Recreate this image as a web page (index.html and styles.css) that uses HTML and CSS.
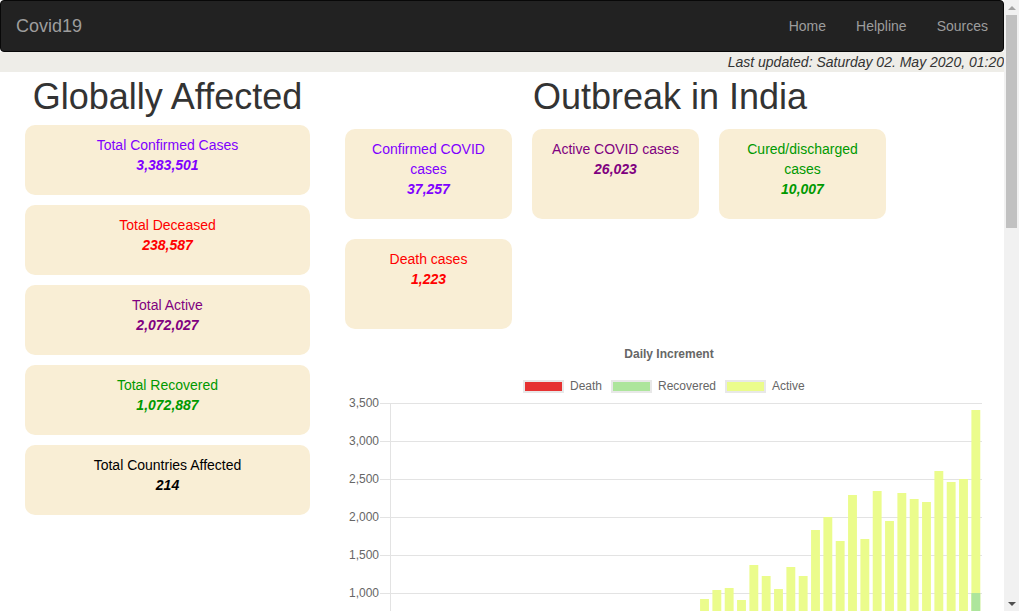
FILE: index.html
```html
<!DOCTYPE html>
<html lang="en">
<head>
<meta charset="utf-8">
<title>Covid19</title>
<link rel="stylesheet" href="styles.css">
</head>
<body>
<div class="page">
<nav class="navbar">
  <a class="brand" href="#">Covid19</a>
  <ul class="nav-links">
    <li><a href="#">Home</a></li>
    <li><a href="#">Helpline</a></li>
    <li><a href="#">Sources</a></li>
  </ul>
</nav>
<div class="updated"><span>Last updated: Saturday 02. May 2020, 01:20</span></div>
<main class="content">
  <section class="global">
    <h1 class="heading heading-global">Globally Affected</h1>
    <div class="stat-list">
      <div class="card card-wide"><div class="c-confirmed">Total Confirmed Cases</div><div class="value c-confirmed">3,383,501</div></div>
      <div class="card card-wide"><div class="c-death">Total Deceased</div><div class="value c-death">238,587</div></div>
      <div class="card card-wide"><div class="c-active">Total Active</div><div class="value c-active">2,072,027</div></div>
      <div class="card card-wide"><div class="c-recovered">Total Recovered</div><div class="value c-recovered">1,072,887</div></div>
      <div class="card card-wide"><div class="c-black">Total Countries Affected</div><div class="value c-black">214</div></div>
    </div>
  </section>
  <section class="india">
    <h1 class="heading heading-india">Outbreak in India</h1>
    <div class="india-grid">
      <div class="card card-small"><div class="c-confirmed">Confirmed COVID cases</div><div class="value c-confirmed">37,257</div></div>
      <div class="card card-small"><div class="c-active">Active COVID cases</div><div class="value c-active">26,023</div></div>
      <div class="card card-small"><div class="c-recovered">Cured/discharged cases</div><div class="value c-recovered">10,007</div></div>
      <div class="card card-small"><div class="c-death">Death cases</div><div class="value c-death">1,223</div></div>
    </div>
    <div class="chart">
      <svg class="chart-svg" width="650" height="400" viewBox="0 0 650 400" xmlns="http://www.w3.org/2000/svg">
        <text class="chart-title" x="324" y="18" text-anchor="middle">Daily Increment</text>
        <g class="legend">
          <rect x="179" y="41" width="39" height="11" fill="#e63232" stroke="#e8e8e8" stroke-width="2"/>
          <text x="225" y="50">Death</text>
          <rect x="267" y="41" width="39" height="11" fill="#ade59c" stroke="#e8e8e8" stroke-width="2"/>
          <text x="313" y="50">Recovered</text>
          <rect x="381" y="41" width="39" height="11" fill="#ebfc8c" stroke="#e8e8e8" stroke-width="2"/>
          <text x="427" y="50">Active</text>
        </g>
        <g class="grid" stroke="#e3e3e3" stroke-width="1">
          <line x1="35" y1="63.5" x2="637" y2="63.5"/>
          <line x1="35" y1="101.5" x2="637" y2="101.5"/>
          <line x1="35" y1="139.5" x2="637" y2="139.5"/>
          <line x1="35" y1="177.5" x2="637" y2="177.5"/>
          <line x1="35" y1="215.5" x2="637" y2="215.5"/>
          <line x1="35" y1="253.5" x2="637" y2="253.5"/>
          <line x1="35" y1="291.5" x2="637" y2="291.5"/>
          <line x1="35" y1="329.5" x2="637" y2="329.5"/>
          <line x1="45.5" y1="63" x2="45.5" y2="339"/>
        </g>
        <g class="ylabels" text-anchor="end">
          <text x="34" y="67">3,500</text>
          <text x="34" y="105">3,000</text>
          <text x="34" y="143">2,500</text>
          <text x="34" y="181">2,000</text>
          <text x="34" y="219">1,500</text>
          <text x="34" y="257">1,000</text>
          <text x="34" y="295">500</text>
          <text x="34" y="333">0</text>
        </g>
        <g class="bars-active" fill="#ebfc8c">
          <rect x="46.73" y="328" width="8.88" height="1"/>
          <rect x="59.06" y="327.8" width="8.88" height="1.2"/>
          <rect x="71.40" y="327.3" width="8.88" height="1.7"/>
          <rect x="83.73" y="326.8" width="8.88" height="2.2"/>
          <rect x="96.06" y="325.8" width="8.88" height="3.2"/>
          <rect x="108.40" y="325" width="8.88" height="4"/>
          <rect x="120.73" y="324.2" width="8.88" height="4.8"/>
          <rect x="133.06" y="323" width="8.88" height="6"/>
          <rect x="145.40" y="321.6" width="8.88" height="7.4"/>
          <rect x="157.73" y="320.5" width="8.88" height="8.5"/>
          <rect x="170.06" y="318" width="8.88" height="11"/>
          <rect x="182.40" y="316.5" width="8.88" height="12.5"/>
          <rect x="194.73" y="314" width="8.88" height="15"/>
          <rect x="207.06" y="312.6" width="8.88" height="16.4"/>
          <rect x="219.40" y="309.5" width="8.88" height="19.5"/>
          <rect x="231.73" y="308" width="8.88" height="21"/>
          <rect x="244.06" y="306" width="8.88" height="23"/>
          <rect x="256.40" y="302" width="8.88" height="27"/>
          <rect x="268.73" y="299.5" width="8.88" height="29.5"/>
          <rect x="281.06" y="297" width="8.88" height="32"/>
          <rect x="293.40" y="291" width="8.88" height="38"/>
          <rect x="305.73" y="289" width="8.88" height="40"/>
          <rect x="318.06" y="285" width="8.88" height="44"/>
          <rect x="330.40" y="281" width="8.88" height="48"/>
          <rect x="342.73" y="277" width="8.88" height="52"/>
          <rect x="355.06" y="259" width="8.88" height="70"/>
          <rect x="367.40" y="250" width="8.88" height="79"/>
          <rect x="379.73" y="248" width="8.88" height="81"/>
          <rect x="392.06" y="260" width="8.88" height="69"/>
          <rect x="404.40" y="225" width="8.88" height="104"/>
          <rect x="416.73" y="236" width="8.88" height="93"/>
          <rect x="429.06" y="249" width="8.88" height="80"/>
          <rect x="441.40" y="227" width="8.88" height="102"/>
          <rect x="453.73" y="236" width="8.88" height="93"/>
          <rect x="466.06" y="190" width="8.88" height="139"/>
          <rect x="478.40" y="177" width="8.88" height="152"/>
          <rect x="490.73" y="201" width="8.88" height="128"/>
          <rect x="503.06" y="155" width="8.88" height="174"/>
          <rect x="515.40" y="199" width="8.88" height="130"/>
          <rect x="527.73" y="151" width="8.88" height="178"/>
          <rect x="540.06" y="181" width="8.88" height="148"/>
          <rect x="552.40" y="153" width="8.88" height="176"/>
          <rect x="564.73" y="159" width="8.88" height="170"/>
          <rect x="577.06" y="162" width="8.88" height="167"/>
          <rect x="589.40" y="131" width="8.88" height="198"/>
          <rect x="601.73" y="142" width="8.88" height="187"/>
          <rect x="614.06" y="139" width="8.88" height="190"/>
          <rect x="626.40" y="70" width="8.88" height="259"/>
        </g>
        <g class="bars-recovered" fill="#ade59c">
          <rect x="170.06" y="328" width="8.88" height="1"/>
          <rect x="182.40" y="328" width="8.88" height="1"/>
          <rect x="194.73" y="327" width="8.88" height="2"/>
          <rect x="207.06" y="327" width="8.88" height="2"/>
          <rect x="219.40" y="327" width="8.88" height="2"/>
          <rect x="231.73" y="326" width="8.88" height="3"/>
          <rect x="244.06" y="326" width="8.88" height="3"/>
          <rect x="256.40" y="326" width="8.88" height="3"/>
          <rect x="268.73" y="325" width="8.88" height="4"/>
          <rect x="281.06" y="325" width="8.88" height="4"/>
          <rect x="293.40" y="324" width="8.88" height="5"/>
          <rect x="305.73" y="324" width="8.88" height="5"/>
          <rect x="318.06" y="323" width="8.88" height="6"/>
          <rect x="330.40" y="323" width="8.88" height="6"/>
          <rect x="342.73" y="322" width="8.88" height="7"/>
          <rect x="355.06" y="319" width="8.88" height="10"/>
          <rect x="367.40" y="317" width="8.88" height="12"/>
          <rect x="379.73" y="315" width="8.88" height="14"/>
          <rect x="392.06" y="321" width="8.88" height="8"/>
          <rect x="404.40" y="314" width="8.88" height="15"/>
          <rect x="416.73" y="309" width="8.88" height="20"/>
          <rect x="429.06" y="317" width="8.88" height="12"/>
          <rect x="441.40" y="311" width="8.88" height="18"/>
          <rect x="453.73" y="314" width="8.88" height="15"/>
          <rect x="466.06" y="304" width="8.88" height="25"/>
          <rect x="478.40" y="301" width="8.88" height="28"/>
          <rect x="490.73" y="309" width="8.88" height="20"/>
          <rect x="503.06" y="299" width="8.88" height="30"/>
          <rect x="515.40" y="307" width="8.88" height="22"/>
          <rect x="527.73" y="294" width="8.88" height="35"/>
          <rect x="540.06" y="304" width="8.88" height="25"/>
          <rect x="552.40" y="297" width="8.88" height="32"/>
          <rect x="564.73" y="299" width="8.88" height="30"/>
          <rect x="577.06" y="301" width="8.88" height="28"/>
          <rect x="589.40" y="289" width="8.88" height="40"/>
          <rect x="601.73" y="294" width="8.88" height="35"/>
          <rect x="614.06" y="291" width="8.88" height="38"/>
          <rect x="626.40" y="253" width="8.88" height="76"/>
        </g>
        <g class="bars-death" fill="#e63232">
          <rect x="355.06" y="327" width="8.88" height="2"/>
          <rect x="367.40" y="327" width="8.88" height="2"/>
          <rect x="379.73" y="327" width="8.88" height="2"/>
          <rect x="404.40" y="326" width="8.88" height="3"/>
          <rect x="416.73" y="326" width="8.88" height="3"/>
          <rect x="441.40" y="326" width="8.88" height="3"/>
          <rect x="466.06" y="325" width="8.88" height="4"/>
          <rect x="478.40" y="325" width="8.88" height="4"/>
          <rect x="503.06" y="325" width="8.88" height="4"/>
          <rect x="527.73" y="324" width="8.88" height="5"/>
          <rect x="552.40" y="324" width="8.88" height="5"/>
          <rect x="589.40" y="323" width="8.88" height="6"/>
          <rect x="614.06" y="323" width="8.88" height="6"/>
          <rect x="626.40" y="323" width="8.88" height="6"/>
        </g>
      </svg>
    </div>
  </section>
</main>
</div>
<div class="scrollbar" aria-hidden="true">
  <div class="sb-btn"><span class="sb-arrow-up"></span></div>
  <div class="sb-thumb"></div>
  <div class="sb-track"></div>
  <div class="sb-btn"><span class="sb-arrow-down"></span></div>
</div>
</body>
</html>
```

FILE: styles.css
```css
* {
  box-sizing: border-box;
}

html, body {
  margin: 0;
  padding: 0;
}

body {
  font-family: "Liberation Sans", Arial, sans-serif;
  font-size: 14px;
  line-height: 20px;
  color: #333;
  background: #fff;
}

.page {
  width: 1004px;
}

.navbar {
  display: flex;
  justify-content: space-between;
  align-items: stretch;
  height: 52px;
  background: #222;
  border: 1px solid #080808;
  border-radius: 4px;
}

.brand {
  display: block;
  padding: 15px 15px;
  font-size: 18px;
  line-height: 20px;
  color: #9d9d9d;
  text-decoration: none;
}

.nav-links {
  display: flex;
  list-style: none;
  margin: 0;
  padding: 0;
}

.nav-links a {
  display: block;
  padding: 15px 15px;
  line-height: 20px;
  color: #9d9d9d;
  text-decoration: none;
}

.updated {
  height: 20px;
  background: #eeede8;
  text-align: right;
  white-space: nowrap;
  overflow: hidden;
  font-style: italic;
  line-height: 20px;
  color: #333;
}

.content {
  display: flex;
  align-items: flex-start;
  gap: 35px;
  padding-left: 25px;
}

.global {
  width: 285px;
  flex: none;
}

.india {
  width: 650px;
  flex: none;
}

.heading {
  margin: 5px 0 0;
  font-size: 36px;
  font-weight: 400;
  line-height: 40px;
  text-align: center;
  color: #333;
}

.heading-global {
  margin-bottom: 8px;
}

.heading-india {
  margin-bottom: 12px;
}

.stat-list {
  display: flex;
  flex-direction: column;
  gap: 10px;
}

.card {
  background: #f9eed5;
  border-radius: 10px;
  text-align: center;
  padding: 10px 15px;
}

.card-wide {
  height: 70px;
}

.india-grid {
  display: grid;
  grid-template-columns: repeat(3, 167px);
  grid-auto-rows: 90px;
  gap: 20px;
}

.value {
  font-weight: 700;
  font-style: italic;
}

.c-confirmed { color: #7f00ff; }
.c-death { color: #ff0000; }
.c-active { color: #800080; }
.c-recovered { color: #009900; }
.c-black { color: #000; }

.chart {
  margin-top: 11px;
}

.chart-svg {
  display: block;
  font-family: "Liberation Sans", Arial, sans-serif;
}

.chart-title {
  font-size: 12px;
  font-weight: 700;
  fill: #666;
}

.legend text,
.ylabels text {
  font-size: 12px;
  fill: #666;
}

/* simulated browser scrollbar shown in the screenshot */
.scrollbar {
  position: fixed;
  top: 0;
  right: 0;
  width: 15px;
  height: 100vh;
  background: #f1f1f1;
  display: flex;
  flex-direction: column;
  align-items: center;
}

.sb-btn {
  height: 15px;
  width: 15px;
  display: flex;
  align-items: center;
  justify-content: center;
  flex: none;
}

.sb-arrow-up {
  width: 0;
  height: 0;
  border-left: 4px solid transparent;
  border-right: 4px solid transparent;
  border-bottom: 4px solid #a3a3a3;
}

.sb-arrow-down {
  width: 0;
  height: 0;
  border-left: 4px solid transparent;
  border-right: 4px solid transparent;
  border-top: 4px solid #505050;
}

.sb-thumb {
  width: 11px;
  height: 213px;
  background: #c1c1c1;
  flex: none;
}

.sb-track {
  flex: 1;
}
```
